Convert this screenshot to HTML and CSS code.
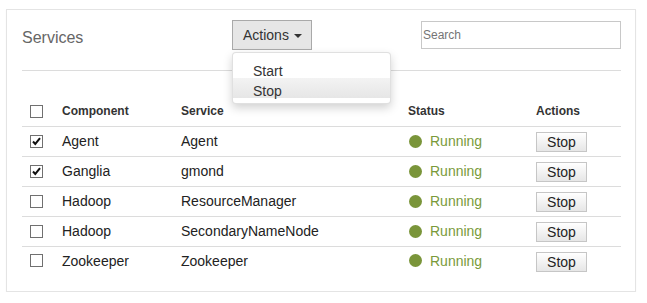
FILE: index.html
```html
<!DOCTYPE html>
<html>
<head>
<meta charset="utf-8">
<link rel="stylesheet" href="styles.css">
</head>
<body>
<div class="panel">
  <div class="head">
    <div class="title">Services</div>
    <div class="actions">
      <button class="actions-btn">Actions <span class="caret"></span></button>
      <ul class="menu">
        <li class="menu-item">Start</li>
        <li class="menu-item hover">Stop</li>
      </ul>
    </div>
    <input class="search" type="text" placeholder="Search">
  </div>
  <table class="grid">
    <colgroup>
      <col class="c-check"><col class="c-comp"><col class="c-svc"><col class="c-status"><col class="c-act">
    </colgroup>
    <thead>
      <tr><th class="cb-cell"><span class="cb"></span></th><th>Component</th><th>Service</th><th>Status</th><th>Actions</th></tr>
    </thead>
    <tbody>
      <tr><td class="cb-cell"><span class="cb"><svg viewBox="0 0 11 11" width="11" height="11"><path d="M2 5.5 L4.3 8 L9 2.2" fill="none" stroke="#111" stroke-width="2"/></svg></span></td><td>Agent</td><td>Agent</td><td><span class="status"><span class="dot"></span>Running</span></td><td><button class="stop">Stop</button></td></tr>
      <tr><td class="cb-cell"><span class="cb"><svg viewBox="0 0 11 11" width="11" height="11"><path d="M2 5.5 L4.3 8 L9 2.2" fill="none" stroke="#111" stroke-width="2"/></svg></span></td><td>Ganglia</td><td>gmond</td><td><span class="status"><span class="dot"></span>Running</span></td><td><button class="stop">Stop</button></td></tr>
      <tr><td class="cb-cell"><span class="cb"></span></td><td>Hadoop</td><td>ResourceManager</td><td><span class="status"><span class="dot"></span>Running</span></td><td><button class="stop">Stop</button></td></tr>
      <tr><td class="cb-cell"><span class="cb"></span></td><td>Hadoop</td><td>SecondaryNameNode</td><td><span class="status"><span class="dot"></span>Running</span></td><td><button class="stop">Stop</button></td></tr>
      <tr><td class="cb-cell"><span class="cb"></span></td><td>Zookeeper</td><td>Zookeeper</td><td><span class="status"><span class="dot"></span>Running</span></td><td><button class="stop">Stop</button></td></tr>
    </tbody>
  </table>
</div>
</body>
</html>
```
FILE: styles.css
```css
* { box-sizing: border-box; }
html, body { margin: 0; padding: 0; background: #fff; }
body { font-family: "Liberation Sans", Arial, sans-serif; color: #333; }

.panel {
  margin: 9px 0 0 6px;
  width: 630px;
  height: 283px;
  border: 1px solid #e4e4e4;
  box-shadow: 0 1px 1px rgba(0,0,0,0.05);
  padding: 0 14px 0 15px;
}

.head {
  height: 61px;
  border-bottom: 1px solid #dcdcdc;
  display: flex;
  align-items: flex-start;
}
.title {
  width: 210px;
  margin-top: 18px;
  font-size: 16px;
  line-height: 20px;
  color: #666;
}
.actions { position: relative; margin-top: 10px; }
.actions-btn {
  display: flex;
  align-items: center;
  height: 30px;
  width: 80px;
  padding: 0 0 0 10px;
  margin: 0;
  border: 1px solid #a9a9a9;
  background: #e6e6e6;
  font-family: "Liberation Sans", Arial, sans-serif;
  font-size: 14px;
  color: #333;
}
.caret {
  display: inline-block;
  width: 0; height: 0;
  margin-left: 5px;
  margin-top: 1px;
  border-top: 4px solid #333;
  border-left: 4px solid transparent;
  border-right: 4px solid transparent;
}
.menu {
  position: absolute;
  left: 0;
  top: 32px;
  width: 159px;
  margin: 0;
  padding: 5px 0;
  list-style: none;
  background: #fff;
  border: 1px solid rgba(0,0,0,0.12);
  border-radius: 4px;
  box-shadow: 0 4px 10px rgba(0,0,0,0.18);
  z-index: 5;
}
.menu-item {
  height: 20px;
  line-height: 26px;
  padding: 0 20px;
  font-size: 14px;
  color: #333;
}
.menu-item.hover { background: linear-gradient(#f3f3f3, #e6e6e6); }

.search {
  margin-left: auto;
  margin-top: 11px;
  width: 200px;
  height: 28px;
  border: 1px solid #c8c8c8;
  padding: 0 0 0 1px;
  font-family: "Liberation Sans", Arial, sans-serif;
  font-size: 12px;
  color: #333;
  outline: none;
}
.search::placeholder { color: #757575; }

.grid {
  margin-top: 25px;
  width: 599px;
  border-collapse: collapse;
  table-layout: fixed;
}
.c-check { width: 40px; }
.c-comp { width: 119px; }
.c-svc { width: 227px; }
.c-status { width: 128px; }
.c-act { width: 85px; }

.grid th, .grid td {
  height: 30px;
  padding: 0;
  text-align: left;
  vertical-align: middle;
  border-bottom: 1px solid #dcdcdc;
}
.grid tbody tr:last-child td { border-bottom: none; height: 29px; }
.grid th { font-size: 12px; font-weight: bold; color: #333; padding-top: 1px; }
.grid td { font-size: 14px; color: #222; }
.cb-cell { padding-left: 8px !important; }

.cb {
  display: block;
  width: 13px;
  height: 13px;
  border: 1px solid #707070;
  background: #fff;
}
.cb svg { display: block; }

.status { display: flex; align-items: center; color: #7a9a3a; }
.dot {
  width: 13px; height: 13px;
  border-radius: 50%;
  background: #7a953a;
  margin-left: 1px;
  margin-right: 8px;
}

.stop {
  display: block;
  width: 51px;
  height: 20px;
  margin: 2px 0 0 0;
  padding: 0;
  border: 1px solid #c6c6c6;
  background: linear-gradient(#ffffff, #e6e6e6);
  font-family: "Liberation Sans", Arial, sans-serif;
  font-size: 14px;
  color: #222;
  line-height: 18px;
}
```
